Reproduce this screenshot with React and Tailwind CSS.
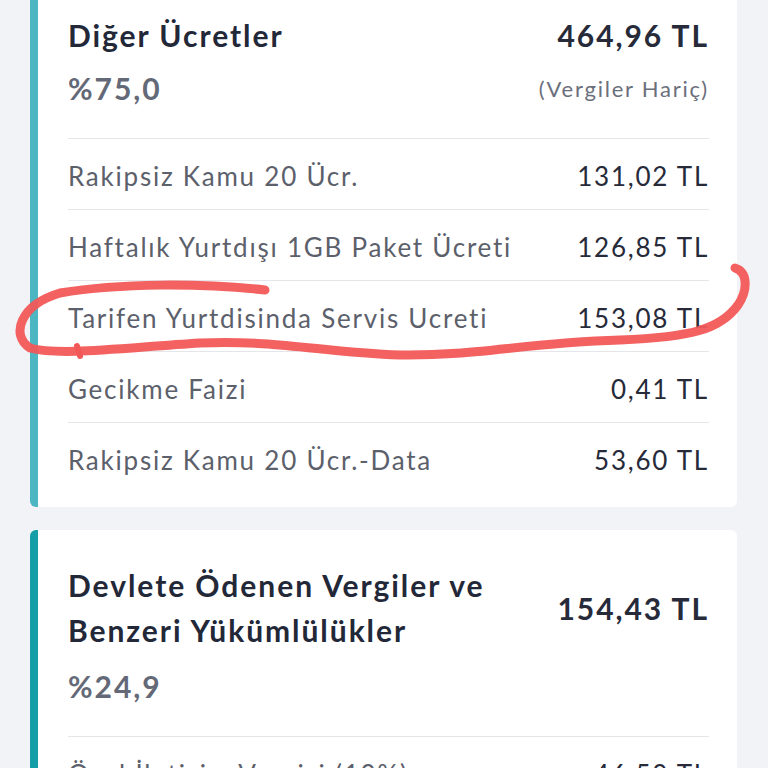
import React from 'react';

const otherFees = [
  { label: 'Rakipsiz Kamu 20 Ücr.', amount: '131,02 TL' },
  { label: 'Haftalık Yurtdışı 1GB Paket Ücreti', amount: '126,85 TL' },
  { label: 'Tarifen Yurtdisinda Servis Ucreti', amount: '153,08 TL' },
  { label: 'Gecikme Faizi', amount: '0,41 TL' },
  { label: 'Rakipsiz Kamu 20 Ücr.-Data', amount: '53,60 TL' },
];

const taxes = [
  { label: 'Özel İletişim Vergisi (10%)', amount: '46,50 TL' },
  { label: 'KDV (20%)', amount: '92,99 TL' },
];

const FeeRow = ({ label, amount }) => (
  <div className="flex items-center justify-between h-[71px] pt-[4px] border-t border-[#e4e6ea]">
    <span className="text-[26px] tracking-[0.068em] text-[#5c606b]">{label}</span>
    <span className="text-[26px] tracking-[0.068em] text-[#262a39]">{amount}</span>
  </div>
);

const Card = ({ accent, title, amount, percent, note, rows, gap = 'mt-[10px]' }) => (
  <div className={`bg-white rounded-[6px] border-l-[8px] ${accent} pl-[30px] pr-[28px] pb-[14px]`}>
    <div className="pt-[33px] pb-[30px]">
      <div className="flex items-center justify-between gap-6">
        <h3 className="text-[30px] leading-[45px] font-bold tracking-[0.065em] text-[#232838]">{title}</h3>
        <span className="text-[30px] leading-[45px] font-bold tracking-[0.065em] text-[#262a39] whitespace-nowrap">{amount}</span>
      </div>
      <div className={`flex items-center justify-between ${gap} h-[40px]`}>
        <span className="text-[30px] font-bold tracking-[0.065em] text-[#646977]">{percent}</span>
        {note && <span className="text-[22px] tracking-[0.08em] text-[#6b6f7b]">{note}</span>}
      </div>
    </div>
    {rows.map((r) => (
      <FeeRow key={r.label} label={r.label} amount={r.amount} />
    ))}
  </div>
);

export default function App() {
  return (
    <div className="relative h-[768px] overflow-hidden bg-[#f2f3f6] font-['Lato',sans-serif]">
      <div className="flex flex-col gap-[23px] pl-[30px] pr-[31px] -mt-[20px]">
        <Card
          accent="border-[#4db6c3]"
          title="Diğer Ücretler"
          amount="464,96 TL"
          percent="%75,0"
          note="(Vergiler Hariç)"
          rows={otherFees}
        />
        <Card
          accent="border-[#149ea7]"
          title={<>Devlete Ödenen Vergiler ve<br />Benzeri Yükümlülükler</>}
          amount="154,43 TL"
          percent="%24,9"
          gap="mt-[13px]"
          rows={taxes}
        />
      </div>

      {/* hand drawn marker around the row */}
      <svg className="absolute top-0 left-0 pointer-events-none" width="768" height="768" viewBox="0 0 768 768">
        <path
          d="M265,290 C200,283 120,283 60,293 C20,305 10,335 30,348 C60,356 120,348 200,343 C280,340 320,352 400,355 C480,356 520,343 620,340 C690,337 720,330 738,305 C748,290 748,272 735,268"
          fill="none"
          stroke="#f25858"
          strokeWidth="9"
          strokeLinecap="round"
          strokeLinejoin="round"
          opacity="0.95"
        />
        <path d="M77,346 L80,356" stroke="#f25858" strokeWidth="6" strokeLinecap="round" />
      </svg>
    </div>
  );
}
